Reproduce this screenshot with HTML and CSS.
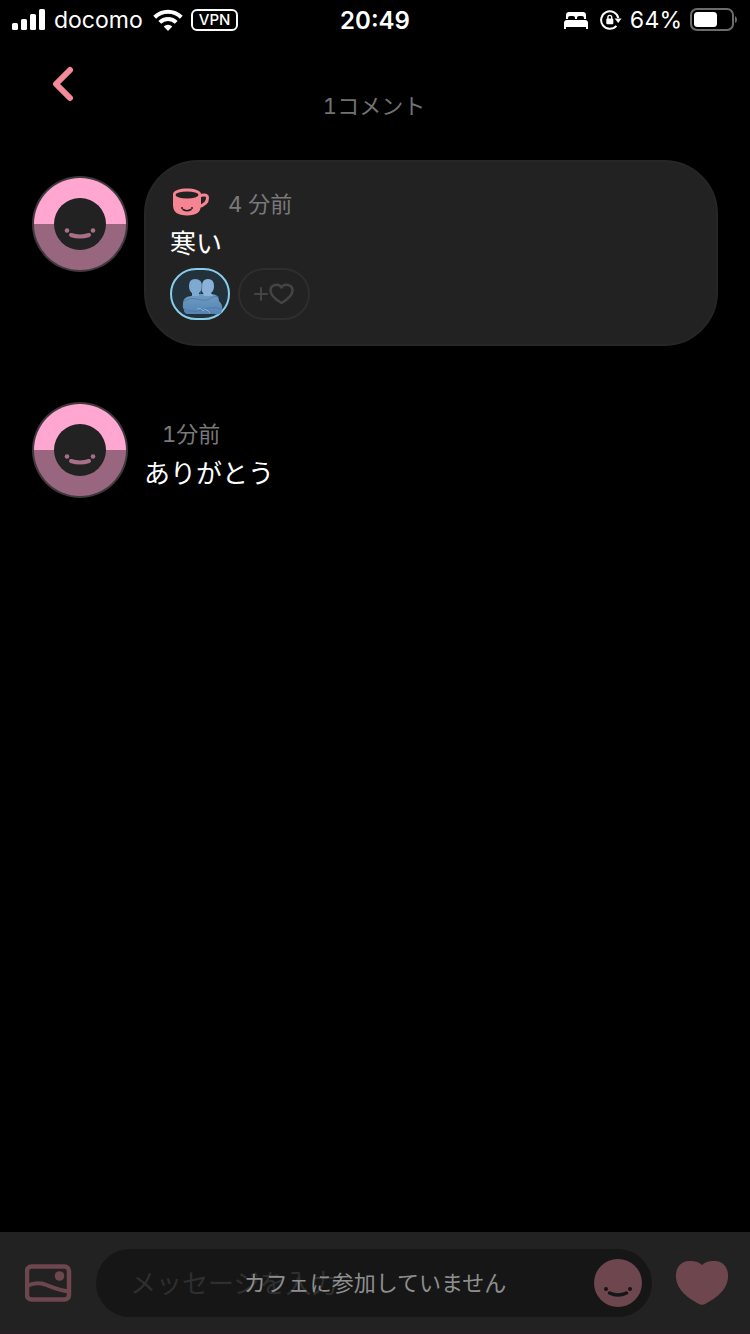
FILE: index.html
```html
<!DOCTYPE html>
<html lang="ja">
	<head>
		<meta charset="utf-8" />
		<meta name="viewport" content="width=device-width, initial-scale=1" />
		<title>コメント</title>
		<link rel="stylesheet" href="styles.css">
	</head>
	<body>
		<div class="status-bar">
			<div class="status-left">
				<svg width="34" height="22" viewBox="0 0 34 22" fill="#fff">
					<rect x="0" y="14" width="6" height="7" rx="1.5" />
					<rect x="9" y="10" width="6" height="11" rx="1.5" />
					<rect x="18" y="5" width="6" height="16" rx="1.5" />
					<rect x="27" y="0" width="6" height="21" rx="1.5" />
				</svg>
				<span class="carrier">docomo</span>
				<svg class="wifi" width="30" height="22" viewBox="0 0 30 22" fill="none" stroke="#fff" stroke-width="4">
					<path d="M1.7 8.3a19 19 0 0 1 26.6 0" />
					<path d="M6.8 13.3a11.6 11.6 0 0 1 16.4 0" />
					<path d="M15 22l-4.3-4.4a6.2 6.2 0 0 1 8.6 0z" fill="#fff" stroke="none" />
				</svg>
				<span class="vpn">VPN</span>
			</div>
			<span class="clock">20:49</span>
			<div class="status-right">
				<svg class="bed" width="24" height="17" viewBox="0 0 24 17" fill="#fff">
					<path d="M2 7V3q0-3 3-3h14q3 0 3 3v4h-2V6q0-2-2-2h-3q-2 0-2 2v1h-2V6q0-2-2-2H6Q4 4 4 6v1z" />
					<path d="M0 17v-6q0-3 3-3h18q3 0 3 3v6h-2v-2H2v2z" />
				</svg>
				<svg width="22" height="20" viewBox="0 0 22 20" fill="none" stroke="#fff" stroke-width="2">
					<path d="M16.4 15.8A8.7 8.7 0 1 1 18.3 8" />
					<path d="M14.6 8.5h7l-3.4 4.6z" fill="#fff" stroke="none" />
					<rect x="6.3" y="8.6" width="7" height="5.6" rx="1" fill="#fff" stroke="none" />
					<path d="M7.9 9V7.3a1.9 1.9 0 0 1 3.8 0V9" stroke-width="1.4" />
				</svg>
				<span class="percent">64%</span>
				<svg width="48" height="24" viewBox="0 0 48 24">
					<rect x="1" y="1" width="42" height="21" rx="6" fill="none" stroke="#6c6c6c" stroke-width="2" />
					<rect x="4" y="4" width="23" height="15" rx="3.5" fill="#fff" />
					<path d="M45 8q2 1 2 3.500t-2 3.500z" fill="#6c6c6c" />
				</svg>
			</div>
		</div>

		<header class="header">
			<button class="icon-btn" type="button" aria-label="戻る">
				<svg width="22" height="36" viewBox="0 0 22 36" fill="none" stroke="#f58a98" stroke-width="6" stroke-linecap="round" stroke-linejoin="round">
					<path d="M18 4L4 18l14 14" />
				</svg>
			</button>
			<h1 class="title">1コメント</h1>
		</header>

		<main class="comments">
			<article class="comment">
				<svg class="avatar" viewBox="0 0 96 96">
					<g id="face">
						<circle cx="48" cy="48" r="48" fill="#3f383d" />
						<path d="M2 48a46 46 0 0 1 92 0z" fill="#ffa6d1" />
						<path d="M2 48a46 46 0 0 0 92 0z" fill="#99667f" />
						<circle cx="48" cy="48" r="26" fill="#222" />
						<circle cx="35" cy="54.500" r="2.300" fill="#a87088" />
						<circle cx="61" cy="54.500" r="2.300" fill="#a87088" />
						<path d="M39 59q9 3 18 0" fill="none" stroke="#a87088" stroke-width="4" stroke-linecap="round" />
					</g>
				</svg>
				<div class="bubble">
					<div class="meta">
						<svg width="38" height="28" viewBox="0 0 38 28">
							<path d="M28 7.500q7.500-2 7.500 2.500c0 5-4 7.500-9 8.500" fill="none" stroke="#f58592" stroke-width="3" />
							<path d="M1 6C1 2.500 8 .5 15 .5S29 2.500 29 6v11q0 10.500-14 10.500T1 17z" fill="#f58592" />
							<ellipse cx="15" cy="7" rx="11.500" ry="3.400" fill="#222" />
							<circle cx="10" cy="20" r="1" fill="#222" />
							<circle cx="20" cy="20" r="1" fill="#222" />
							<path d="M11 21.500q4 2.600 8 0" fill="none" stroke="#222" stroke-width="1.600" stroke-linecap="round" />
						</svg>
						<time>4 分前</time>
					</div>
					<p class="text">寒い</p>
					<div class="reactions">
						<button class="reaction active" type="button" aria-label="ハグ">
							<svg width="42" height="38" viewBox="0 0 42 38">
								<defs>
									<linearGradient id="hug" x1="0" y1="0" x2="0" y2="1">
										<stop offset="0" stop-color="#6f9cc4" />
										<stop offset="1" stop-color="#5584b3" />
									</linearGradient>
								</defs>
								<path d="M2 25q0-6 8-7l9-2h11q8 0 8 7 4 4 3 8l-1 4q-3 2-7 1H6q-3-1-3-4-2-3-1-7z" fill="url(#hug)" />
								<path d="M14 1q7 0 7 7 0 5-3 7v3h-7v-3q-3-2-3-7 0-7 6-7z" fill="#7ea9d1" />
								<path d="M27 1q6 0 6 7 0 5-3 7l2 3h-9l-1-3q-2-2-1-7 0-7 6-7z" fill="#8ab2d8" />
								<path d="M3 23q7-4 13-2 9 3 14-1 4-3 8-1M3 31q9 4 18 1 10-4 19-1M21 7q0 6-2 9" fill="none" stroke="#4a7099" stroke-width="1" opacity="0.600" />
								<path d="M16 31q4-2 6 2 1-3 4-1l3 3" fill="none" stroke="#86afd6" stroke-width="1" />
							</svg>
						</button>
						<button class="reaction add" type="button" aria-label="リアクションを追加">
							<svg width="42" height="22" viewBox="0 0 42 22" fill="none" stroke="#444" stroke-linejoin="round">
								<path d="M2 11h12M8 5v12" stroke-width="2" stroke-linecap="round" />
								<path d="M28.500 20C20 15 17.500 11.500 17.500 7.500c0-6 8-7.500 11-3 3-4.500 11-3 11 3 0 4-2.500 7.500-11 12.500z" stroke-width="2.500" />
							</svg>
						</button>
					</div>
				</div>
			</article>

			<article class="comment">
				<svg class="avatar" viewBox="0 0 96 96"><use href="#face" /></svg>
				<div class="plain">
					<div class="meta"><time>1分前</time></div>
					<p class="text">ありがとう</p>
				</div>
			</article>
		</main>

		<footer class="composer">
			<button class="icon-btn" type="button" aria-label="画像">
				<svg width="48" height="38" viewBox="0 0 48 38">
					<rect x="2" y="2.500" width="42" height="33" rx="4.500" fill="none" stroke="#6d464e" stroke-width="4.500" />
					<circle cx="34.500" cy="12" r="4.800" fill="#6d464e" />
					<path d="M2 22q9-4.500 18-1.500c9 3.500 14 6 24 7" fill="none" stroke="#6d464e" stroke-width="4" />
				</svg>
			</button>
			<div class="field">
				<input class="message" type="text" placeholder="メッセージを入力" aria-label="メッセージ" />
				<button class="icon-btn" type="button" aria-label="スタンプ">
					<svg width="48" height="48" viewBox="0 0 48 48">
						<circle cx="24" cy="24" r="24" fill="#6d464e" />
						<circle cx="12" cy="30" r="2" fill="#161616" />
						<circle cx="36" cy="30" r="2" fill="#161616" />
						<path d="M15.500 34q8.500 4 17 0" fill="none" stroke="#161616" stroke-width="3.500" stroke-linecap="round" />
					</svg>
				</button>
			</div>
			<button class="icon-btn" type="button" aria-label="いいね">
				<svg width="54" height="46" viewBox="0 0 54 46" fill="#6d464e">
					<path d="M27 5C31 1 36 1 40 1c8 0 14 7 13 17-1 12-12 20-22 25.500q-4 2.500-8 0C13 38 2 30 1 18 0 8 6 1 14 1c4 0 9 0 13 4z" />
				</svg>
			</button>
			<p class="notice">カフェに参加していません</p>
		</footer>
	</body>
</html>
```
FILE: styles.css
```css
* {
	box-sizing: border-box;
}

body {
	margin: 0;
	min-height: 100vh;
	display: flex;
	flex-direction: column;
	background-color: #000;
	color: #fff;
	font-family: Inter, 'Noto Sans CJK JP', sans-serif;
	font-variant-numeric: tabular-nums;
}

h1,
p {
	margin: 0;
	font-weight: 400;
}

svg {
	display: block;
	flex: none;
}

button {
	padding: 0;
	border: none;
	background: none;
	cursor: pointer;
}

.status-bar {
	display: grid;
	grid-template-columns: 1fr auto 1fr;
	align-items: center;
	height: 40px;
	padding: 0 12px;
	font-size: 23px;
}

.status-left,
.status-right {
	display: flex;
	align-items: center;
	gap: 8px;
}

.status-right {
	justify-content: flex-end;
}

.wifi {
	margin-left: 2px;
}

.bed {
	margin-right: 4px;
}

.vpn {
	padding: 0 6px;
	border: 2px solid #fff;
	border-radius: 6px;
	font-size: 15px;
	font-weight: 500;
	line-height: 18px;
}

.clock {
	font-size: 24px;
	font-weight: 600;
	font-variant-numeric: normal;
}

.header {
	display: grid;
	grid-template-columns: 96px 1fr 96px;
	align-items: start;
	padding: 26px 2px 38px 0;
}

.header .icon-btn {
	justify-self: end;
	padding-right: 22px;
}

.title {
	padding-top: 24px;
	font-size: 22px;
	line-height: 32px;
	text-align: center;
	color: #727272;
}

.comments {
	flex: 1;
	display: flex;
	flex-direction: column;
	gap: 56px;
	padding: 0 32px;
}

.comment {
	display: flex;
	align-items: flex-start;
	gap: 16px;
}

.avatar {
	width: 96px;
	height: 96px;
	margin-top: 16px;
}

.comment + .comment .avatar {
	margin-top: 0;
}

.bubble {
	flex: 1;
	padding: 24px;
	border: 2px solid #262626;
	border-radius: 54px;
	background-color: #222;
}

.plain {
	flex: 1;
	padding-top: 14px;
}

.meta {
	display: flex;
	align-items: center;
	gap: 18px;
	height: 32px;
	padding-left: 2px;
	font-size: 22px;
	color: #7a7a7a;
}

.plain .meta {
	padding-left: 18px;
}

.text {
	margin-top: 2px;
	font-size: 26px;
	line-height: 48px;
}

.reactions {
	display: flex;
	gap: 8px;
}

.reaction {
	display: flex;
	align-items: center;
	justify-content: center;
	height: 52px;
	border: 2px solid #2e2e2e;
	border-radius: 26px;
}

.active {
	width: 60px;
	padding-top: 6px;
	padding-left: 4px;
	border-color: #87ceeb;
	background-color: #23313a;
}

.add {
	width: 72px;
}

.composer {
	position: relative;
	display: flex;
	align-items: center;
	gap: 23px;
	height: 102px;
	padding: 0 21px 0 25px;
	background-color: #222;
	box-shadow: inset 0 -2px #291c24;
}

.field {
	flex: 1;
	display: flex;
	align-items: center;
	height: 68px;
	padding: 0 10px 0 34px;
	border-radius: 34px;
	background-color: #161616;
}

.message {
	flex: 1;
	min-width: 0;
	padding: 0;
	border: none;
	outline: none;
	background: none;
	color: #fff;
	font: inherit;
	font-size: 26px;
}

.message::placeholder {
	color: #2f2f2f;
	opacity: 1;
}

/* shown over the disabled composer */
.notice {
	position: absolute;
	inset: 0;
	font-size: 22px;
	line-height: 102px;
	text-align: center;
	color: #8e8e8e;
	pointer-events: none;
}
```
